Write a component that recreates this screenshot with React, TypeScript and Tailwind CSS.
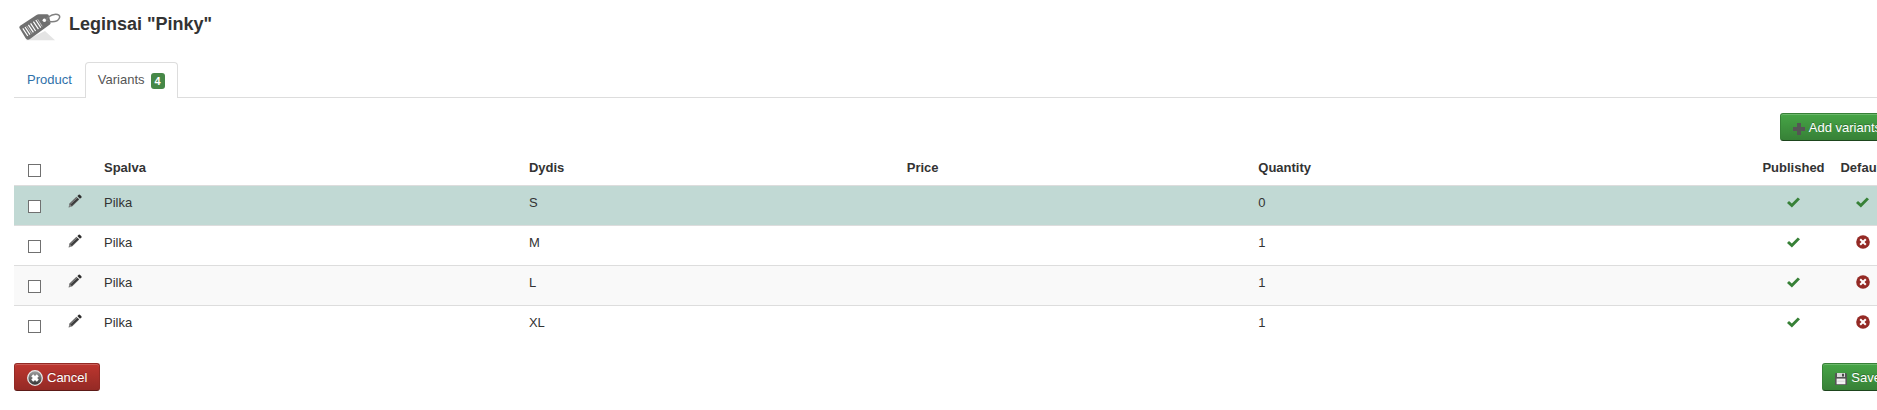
import { useState } from "react"

interface Variant {
  id: number
  color: string
  size: string
  price: string
  quantity: number
  published: boolean
  isDefault: boolean
}

const variants: Variant[] = [
  { id: 1, color: "Pilka", size: "S", price: "", quantity: 0, published: true, isDefault: true },
  { id: 2, color: "Pilka", size: "M", price: "", quantity: 1, published: true, isDefault: false },
  { id: 3, color: "Pilka", size: "L", price: "", quantity: 1, published: true, isDefault: false },
  { id: 4, color: "Pilka", size: "XL", price: "", quantity: 1, published: true, isDefault: false },
]

function TagIcon() {
  return (
    <svg className="h-[30px] w-[42px]" viewBox="0 0 42 30" fill="none">
      <path d="M7 27.2 L26 18 L36 27.2 Z" fill="#e4e4e4" />
      <path
        d="M0.6 15.2 Q-0.2 13.8 1.2 12.8 L17.5 2 Q18.6 1.2 19.8 1.2 L28 1.2 Q29.4 1.2 29.8 2.5 L31.6 9.6 Q31.8 10.8 30.9 11.6 L11 26 Q8.4 27.6 6.8 25.4 Z"
        fill="#707070"
      />
      <circle cx="25.4" cy="7.2" r="1.8" fill="#fff" />
      <path
        d="M3.8 15.4l5 7.6M6 14l5 7.6M9.4 11.8l5 7.6M11.6 10.4l5 7.6M14.4 8.6l5 7.6M16.8 7l5 7.6"
        stroke="#fff"
        strokeWidth="1.2"
      />
      <path d="M7.7 13l5 7.6M18.6 6.2l4.6 7.2" stroke="#dcdcdc" strokeWidth="0.7" />
      <path
        d="M27 6.6 C29.5 3.4 32 1.8 35.5 1.4 C39.5 1 41.4 2.6 40.4 5 C39.4 7.6 36 8.8 32.5 8.7 C30 8.6 29 7.6 27 6.6"
        stroke="#808080"
        strokeWidth="1.5"
      />
    </svg>
  )
}

function PencilIcon() {
  return (
    <svg className="h-[14px] w-[14px]" viewBox="0 0 14 14">
      <path d="M1.5 9.6 L8.4 2.8 L11.2 5.6 L4.3 12.3 L0.6 13.5 Z" fill="#5a5a5a" />
      <path d="M9.3 2 L10.7 0.7 Q11.3 0.2 11.9 0.7 L13.4 2.2 Q13.9 2.8 13.4 3.4 L12 4.8 Z" fill="#2d2d2d" />
      <path d="M3.2 10.9 L10.2 4.6" stroke="#3a3a3a" strokeWidth="1.6" />
      <path d="M2.5 10 L9 3.8" stroke="#8d8d8d" strokeWidth="0.9" />
      <path d="M1.8 10.8 L3.2 12.2 L1.8 12.7 L1.3 12.2 Z" fill="#b0b0b0" />
    </svg>
  )
}

function CheckIcon() {
  return (
    <svg className="inline-block h-[11px] w-[13px] align-top" viewBox="0 0 13 11">
      <path d="M0 6 L2 4 L4.8 6.4 L10.8 0.4 L13 2.2 L4.9 10.6 Z" fill="#378137" />
    </svg>
  )
}

function RemoveIcon() {
  return (
    <svg className="inline-block h-[14px] w-[14px] align-top" viewBox="0 0 14 14">
      <circle cx="7" cy="7" r="6.8" fill="#942a25" />
      <path d="M4.2 4.2l5.6 5.6M9.8 4.2l-5.6 5.6" stroke="#fff" strokeWidth="2" />
    </svg>
  )
}

function PlusIcon() {
  return (
    <svg className="mt-0.5 h-3 w-3" viewBox="0 0 12 12">
      <path d="M4 0h4v4h4v4h-4v4h-4v-4h-4v-4h4z" fill="#555" />
    </svg>
  )
}

function CancelIcon() {
  return (
    <svg className="h-4 w-4" viewBox="0 0 16 16">
      <defs>
        <linearGradient id="cancel-fill" x1="0" y1="0" x2="0" y2="1">
          <stop offset="0" stopColor="#a5a5a5" />
          <stop offset="0.5" stopColor="#6a6a6a" />
          <stop offset="1" stopColor="#303030" />
        </linearGradient>
      </defs>
      <circle cx="8" cy="8" r="7.3" fill="url(#cancel-fill)" stroke="#e8e8e8" strokeWidth="1.3" />
      <path d="M5.2 5.4l5.6 5.2M10.8 5.4l-5.6 5.2" stroke="#fff" strokeWidth="2.8" />
    </svg>
  )
}

function SaveIcon() {
  return (
    <svg className="mt-0.5 h-3 w-3" viewBox="0 0 12 12">
      <path d="M0.5 0h10.5l1 1v11h-12v-11.5z" fill="#555" />
      <path d="M2 0h8v4h-8z" fill="#d9d9d9" />
      <path d="M7 0.8h2v2.6h-2z" fill="#494949" />
      <path d="M1.6 5.6h8.8v5.6h-8.8z" fill="#f1f1f1" />
      <path d="M2.4 8.2h7.2" stroke="#cfcfcf" strokeWidth="0.8" />
    </svg>
  )
}

const buttonBase =
  "flex h-7 items-center gap-1 rounded-[3px] border px-3 pt-0.5 text-white [text-shadow:0_-1px_0_rgba(0,0,0,0.25)] shadow-[inset_0_1px_0_rgba(255,255,255,0.2)]"
const greenButton = `${buttonBase} border-[#378137] border-b-[#1d451d] bg-linear-to-b from-[#46a546] to-[#378137]`
const redButton = `${buttonBase} border-[#942a25] border-b-[#5c1a17] bg-linear-to-b from-[#bd362f] to-[#942a25]`

const checkbox = "block h-[13px] w-[13px] appearance-none border border-[#707070] bg-white checked:bg-[#707070]"

export default function App() {
  const [selected, setSelected] = useState<number[]>([])
  const allSelected = selected.length === variants.length

  const toggle = (id: number) =>
    setSelected(selected.includes(id) ? selected.filter((s) => s !== id) : [...selected, id])

  return (
    <div className="overflow-hidden bg-white font-['Liberation_Sans',Arial,sans-serif] text-[13px] leading-[18px] text-[#333]">
      <div className="-mr-[17px] pb-5 pl-[14px]">
        {/* Title */}
        <header className="flex h-[62px] items-start gap-2 pt-[13px] pl-[5px]">
          <TagIcon />
          <h1 className="text-lg leading-[22px] font-bold">Leginsai "Pinky"</h1>
        </header>

        {/* Tabs */}
        <nav className="flex border-b border-[#ddd]">
          <a href="#product" className="px-[13px] pt-[9px] pb-2 text-[#3071a9]">
            Product
          </a>
          <a
            href="#variants"
            className="-mb-px flex gap-1.5 rounded-t border border-b-0 border-[#ddd] bg-white px-3 pt-2 pb-[9px] text-[#555]"
          >
            Variants
            <span className="mt-0.5 h-4 rounded-[3px] bg-[#468847] px-1 text-[11px] leading-4 font-bold text-white">
              4
            </span>
          </a>
        </nav>

        <div className="mt-[15px] mb-[10px] flex justify-end">
          <button type="button" className={greenButton}>
            <PlusIcon />
            Add variants
          </button>
        </div>

        {/* Variants table */}
        <table className="w-full table-fixed">
          <colgroup>
            <col className="w-[46px]" />
            <col className="w-9" />
            <col className="w-[22.6%]" />
            <col className="w-[20.1%]" />
            <col className="w-[18.7%]" />
            <col />
            <col className="w-[75px]" />
            <col className="w-[63px]" />
          </colgroup>
          <thead>
            <tr className="text-left [&>th]:p-2 [&>th]:align-bottom">
              <th className="pl-[14px]!">
                <input
                  type="checkbox"
                  aria-label="Select all"
                  className={checkbox}
                  checked={allSelected}
                  onChange={() => setSelected(allSelected ? [] : variants.map((v) => v.id))}
                />
              </th>
              <th></th>
              <th>Spalva</th>
              <th>Dydis</th>
              <th>Price</th>
              <th>Quantity</th>
              <th className="px-0! text-center">Published</th>
              <th className="text-center">Default</th>
            </tr>
          </thead>
          <tbody>
            {variants.map((v) => (
              <tr
                key={v.id}
                className={`h-10 border-t border-[#ddd] [&>td]:p-2 [&>td]:align-top ${
                  v.isDefault ? "bg-[#c1d9d4]" : "odd:bg-[#f9f9f9]"
                }`}
              >
                <td className="pt-[14px]! pl-[14px]!">
                  <input
                    type="checkbox"
                    aria-label={`Select ${v.color} ${v.size}`}
                    className={checkbox}
                    checked={selected.includes(v.id)}
                    onChange={() => toggle(v.id)}
                  />
                </td>
                <td>
                  <button type="button" aria-label="Edit" className="block">
                    <PencilIcon />
                  </button>
                </td>
                <td>{v.color}</td>
                <td>{v.size}</td>
                <td>{v.price}</td>
                <td>{v.quantity}</td>
                <td className="pt-[11px]! text-center">{v.published ? <CheckIcon /> : <RemoveIcon />}</td>
                <td className={v.isDefault ? "pt-[11px]! text-center" : "pt-[9px]! text-center"}>
                  {v.isDefault ? <CheckIcon /> : <RemoveIcon />}
                </td>
              </tr>
            ))}
          </tbody>
        </table>

        {/* Form actions */}
        <div className="mt-[17px] flex justify-between">
          <button type="button" className={redButton}>
            <CancelIcon />
            Cancel
          </button>
          <button type="button" className={greenButton}>
            <SaveIcon />
            Save
          </button>
        </div>
      </div>
    </div>
  )
}
